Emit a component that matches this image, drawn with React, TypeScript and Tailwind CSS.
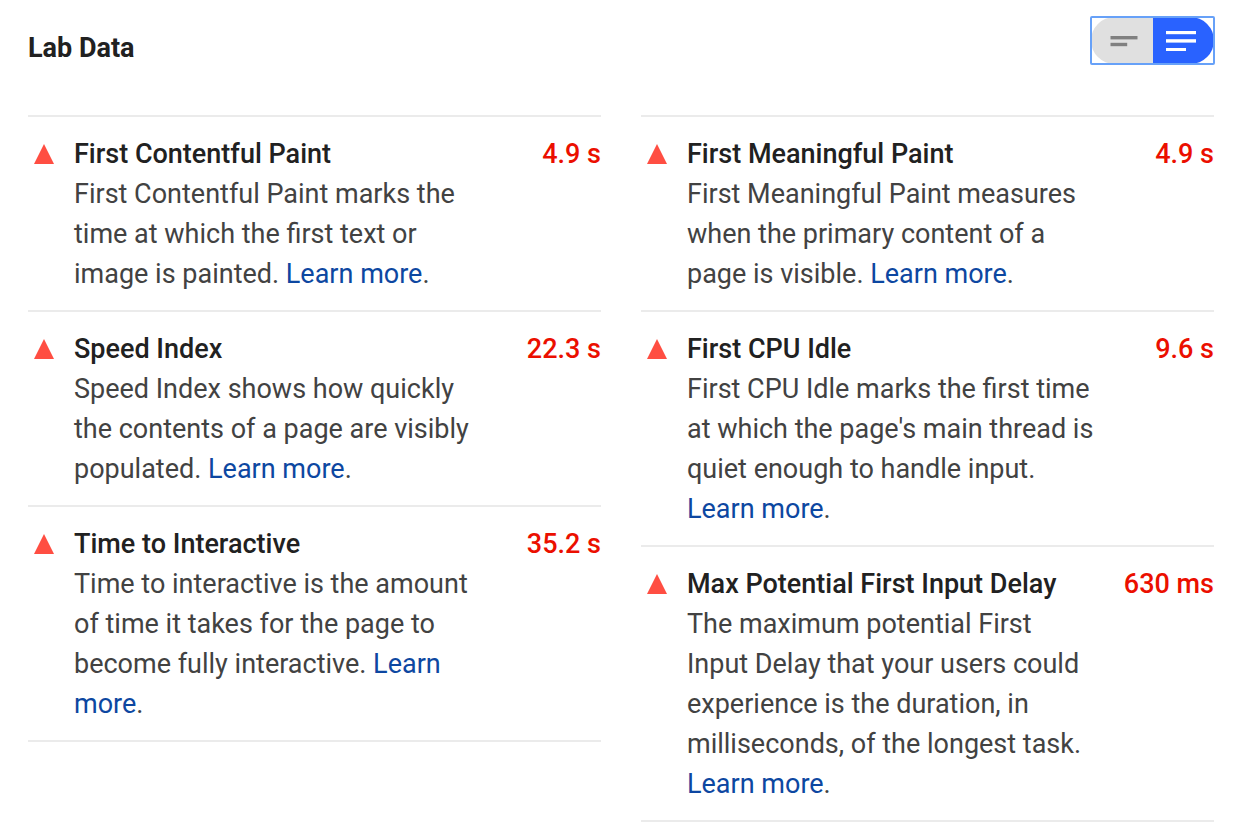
import React, { useState } from 'react'

interface Metric {
    title: string
    value: string
    description: string
}

const leftMetrics: Metric[] = [
    {
        title: 'First Contentful Paint',
        value: '4.9 s',
        description: 'First Contentful Paint marks the time at which the first text or image is painted.',
    },
    {
        title: 'Speed Index',
        value: '22.3 s',
        description: 'Speed Index shows how quickly the contents of a page are visibly populated.',
    },
    {
        title: 'Time to Interactive',
        value: '35.2 s',
        description: 'Time to interactive is the amount of time it takes for the page to become fully interactive.',
    },
]

const rightMetrics: Metric[] = [
    {
        title: 'First Meaningful Paint',
        value: '4.9 s',
        description: 'First Meaningful Paint measures when the primary content of a page is visible.',
    },
    {
        title: 'First CPU Idle',
        value: '9.6 s',
        description: "First CPU Idle marks the first time at which the page's main thread is quiet enough to handle input.",
    },
    {
        title: 'Max Potential First Input Delay',
        value: '630 ms',
        description:
            'The maximum potential First Input Delay that your users could experience is the duration, in milliseconds, of the longest task.',
    },
]

const ViewToggle: React.FC<{ expanded: boolean; onChange: (expanded: boolean) => void }> = ({ expanded, onChange }) => (
    <label className="relative block cursor-pointer rounded-[1px] outline-2 -outline-offset-1 outline-[#67a1f8]">
        <input
            type="checkbox"
            aria-label="Show metric descriptions"
            checked={expanded}
            onChange={e => onChange(e.target.checked)}
            className="absolute inset-0 h-full w-full cursor-pointer opacity-0"
        />
        <div className="flex overflow-hidden rounded-full">
            <div className={expanded ? 'bg-[#e0e0e0] text-[#808080]' : 'bg-[#2962ff] text-white'}>
                <svg width="62" height="47" viewBox="0 0 62 47" fill="currentColor" className="block">
                    <rect x="19.5" y="19" width="27" height="3.4" />
                    <rect x="19.5" y="25.8" width="16.7" height="3.4" />
                </svg>
            </div>
            <div className={expanded ? 'bg-[#2962ff] text-white' : 'bg-[#e0e0e0] text-[#808080]'}>
                <svg width="61" height="47" viewBox="0 0 61 47" fill="currentColor" className="block">
                    <rect x="13" y="14" width="30" height="3.2" />
                    <rect x="13" y="22.2" width="30" height="3.4" />
                    <rect x="13" y="31" width="20" height="3" />
                </svg>
            </div>
        </div>
    </label>
)

const MetricRow: React.FC<{ metric: Metric; expanded: boolean }> = ({ metric, expanded }) => (
    <div className="grid grid-cols-[46px_7fr_2fr] border-t-2 border-[#ebebeb] pt-[17px] pb-4">
        <svg width="20" height="20" viewBox="0 0 20 20" className="mt-[10px] ml-[6px]">
            <path d="M10 0L20 20H0z" fill="#ff4e42" />
        </svg>
        <h3 className="font-medium whitespace-nowrap text-[#212121]">{metric.title}</h3>
        <div className="text-right font-medium whitespace-nowrap text-[#eb0f00]">{metric.value}</div>
        {expanded && (
            <p className="col-start-2 text-[#424242]">
                {metric.description}{' '}
                <a href="#" className="text-[#0d47a1]">
                    Learn more
                </a>
                .
            </p>
        )}
    </div>
)

const MetricColumn: React.FC<{ metrics: Metric[]; expanded: boolean }> = ({ metrics, expanded }) => (
    <div className="border-b-2 border-[#ebebeb]">
        {metrics.map(metric => (
            <MetricRow key={metric.title} metric={metric} expanded={expanded} />
        ))}
    </div>
)

const App: React.FC = () => {
    const [expanded, setExpanded] = useState(true)

    return (
        <main className="bg-white pt-[17px] pr-[31px] pl-7 font-[Roboto,sans-serif] text-[27px] leading-10">
            <header className="mb-[47px] flex items-start justify-between">
                <h2 className="mt-[11px] font-bold text-[#212121]">Lab Data</h2>
                <ViewToggle expanded={expanded} onChange={setExpanded} />
            </header>
            <div className="grid grid-cols-2 items-start gap-10">
                <MetricColumn metrics={leftMetrics} expanded={expanded} />
                <MetricColumn metrics={rightMetrics} expanded={expanded} />
            </div>
        </main>
    )
}

export default App
